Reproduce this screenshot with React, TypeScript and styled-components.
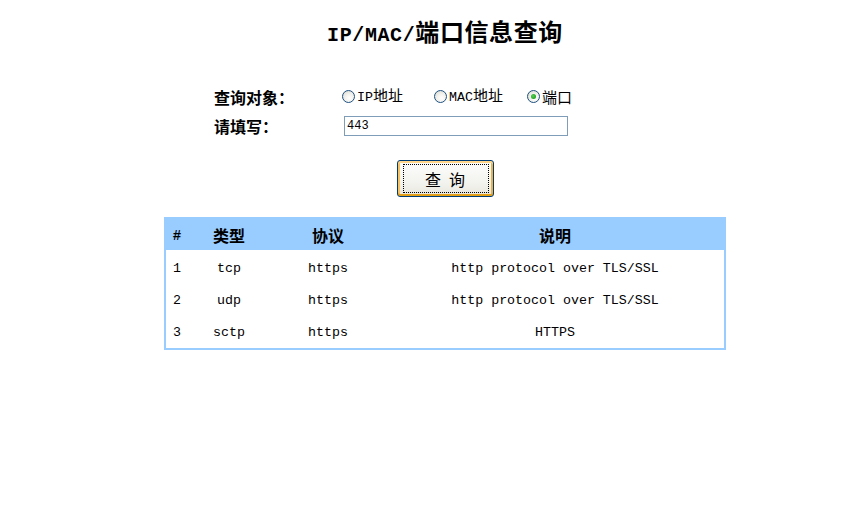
import React from "react";
import styled, { createGlobalStyle } from "styled-components";

const Global = createGlobalStyle`
  html, body { margin: 0; padding: 0; background: #ffffff; }
  body { font-family: "Noto Sans CJK SC", "Liberation Mono", monospace; color: #000; }
`;

const Page = styled.div`
  box-sizing: border-box;
  width: 867px;
  padding: 15px 0 0 23px;
  display: flex;
  flex-direction: column;
  align-items: center;
`;

const Title = styled.h1`
  margin: 0;
  height: 32px;
  line-height: 32px;
  font-size: 24px;
  font-weight: 700;
  font-family: "Noto Sans CJK SC", sans-serif;
  letter-spacing: 0.6px;
`;

const Latin = styled.span<{ $size?: number }>`
  font-family: "Liberation Mono", monospace;
  font-size: ${(p) => p.$size ?? 13.3}px;
`;

const Form = styled.div`
  width: 462px;
  margin-top: 35px;
  display: grid;
  grid-template-columns: 128px 1fr;
  grid-auto-rows: 29px;
  align-items: center;
`;

const Label = styled.div`
  font-size: 16px;
  font-weight: 700;
  line-height: 20px;
`;

const Options = styled.div`
  display: grid;
  grid-template-columns: 92px 93px auto;
  align-items: center;
`;

const Option = styled.label`
  display: flex;
  align-items: center;
  gap: 2px;
  font-size: 15px;
  line-height: 20px;
`;

const Radio = styled.span<{ $checked?: boolean }>`
  position: relative;
  box-sizing: border-box;
  width: 13px;
  height: 13px;
  border-radius: 50%;
  border: 1px solid #1c5180;
  background: radial-gradient(circle at 60% 65%, #ffffff 0%, #f2f1ec 45%, #d4d2c8 100%);
  &::after {
    content: "";
    display: ${(p) => (p.$checked ? "block" : "none")};
    position: absolute;
    left: 3px;
    top: 3px;
    width: 5px;
    height: 5px;
    border-radius: 50%;
    background: radial-gradient(circle at 40% 40%, #55d055, #21a121 70%);
  }
`;

const Input = styled.input`
  box-sizing: border-box;
  display: block;
  width: 224px;
  height: 20px;
  margin: 0 0 0 2px;
  padding: 0 2px;
  border: 1px solid #7f9db9;
  font-family: "Liberation Mono", monospace;
  font-size: 12px;
  color: #000;
  outline: none;
`;

const Button = styled.button`
  position: relative;
  box-sizing: border-box;
  margin-top: 20px;
  width: 97px;
  height: 37px;
  border: 1px solid #003c74;
  border-radius: 3px;
  background: linear-gradient(#fefefe, #f1f1ec 70%, #e6e4da);
  box-shadow: inset 0 2px 0 #ffd68c, inset 0 -2px 0 #e5a01a, inset 2px 0 0 #f8c260, inset -2px 0 0 #f0b040;
  font-family: "Noto Sans CJK SC", sans-serif;
  font-size: 16px;
  letter-spacing: 8px;
  padding: 0 0 0 8px;
  color: #000;
  &::after {
    content: "";
    position: absolute;
    inset: 3px 4px 3px 5px;
    border: 1px dotted #000;
  }
`;

const Table = styled.table`
  margin-top: 20px;
  width: 562px;
  border-collapse: collapse;
  border: 2px solid #99ccff;
`;

const HeadRow = styled.tr`
  background: #99ccff;
  height: 32px;
`;

const Th = styled.th<{ $w?: number }>`
  padding: 0;
  width: ${(p) => (p.$w ? `${p.$w}px` : "auto")};
  font-size: 16px;
  font-weight: 700;
  text-align: center;
  line-height: 20px;
`;

const Row = styled.tr<{ $first?: boolean }>`
  & > td {
    padding-top: ${(p) => (p.$first ? 3 : 1)}px;
  }
`;

const Td = styled.td`
  padding: 0;
  height: 31px;
  box-sizing: content-box;
  text-align: center;
  vertical-align: middle;
  font-family: "Liberation Mono", monospace;
  font-size: 13.3px;
`;

const rows = [
  { n: "1", type: "tcp", proto: "https", desc: "http protocol over TLS/SSL" },
  { n: "2", type: "udp", proto: "https", desc: "http protocol over TLS/SSL" },
  { n: "3", type: "sctp", proto: "https", desc: "HTTPS" },
];

export default function App() {
  return (
    <>
      <Global />
      <Page>
        <Title>
          <Latin $size={20}>IP/MAC/</Latin>端口信息查询
        </Title>
        <Form>
          <Label>查询对象：</Label>
          <Options>
            <Option>
              <Radio />
              <span>
                <Latin>IP</Latin>地址
              </span>
            </Option>
            <Option>
              <Radio />
              <span>
                <Latin>MAC</Latin>地址
              </span>
            </Option>
            <Option>
              <Radio $checked />
              <span>端口</span>
            </Option>
          </Options>
          <Label>请填写：</Label>
          <div>
            <Input defaultValue="443" />
          </div>
        </Form>
        <Button>查询</Button>
        <Table>
          <thead>
            <HeadRow>
              <Th $w={22}>
                <Latin $size={14}>#</Latin>
              </Th>
              <Th $w={82}>类型</Th>
              <Th $w={116}>协议</Th>
              <Th>说明</Th>
            </HeadRow>
          </thead>
          <tbody>
            {rows.map((r, i) => (
              <Row key={r.n} $first={i === 0}>
                <Td>{r.n}</Td>
                <Td>{r.type}</Td>
                <Td>{r.proto}</Td>
                <Td>{r.desc}</Td>
              </Row>
            ))}
          </tbody>
        </Table>
      </Page>
    </>
  );
}
